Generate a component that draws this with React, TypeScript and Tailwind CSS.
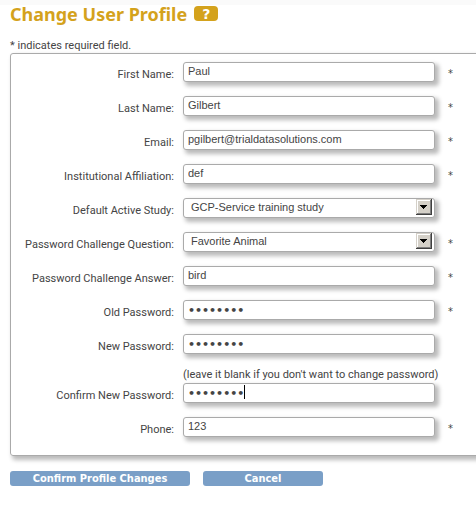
import type { ReactNode } from 'react';

const control =
  "block h-5 w-full appearance-none rounded-[3px] border border-[#aaaaaa] bg-white pb-[2px] font-['Liberation_Sans',sans-serif] text-[11px] leading-4 text-[#444444] shadow-[3px_3px_4px_1px_#bbbbbb] outline-none";

const actionButton =
  "h-[15px] rounded-[3px] bg-[#7a9fc7] font-['DejaVu_Sans_Condensed','DejaVu_Sans',sans-serif] text-[11px] leading-4 font-bold text-white";

type RowProps = {
  id: string;
  label: string;
  required?: boolean;
  hint?: string;
  children: ReactNode;
};

function Row({ id, label, required, hint, children }: RowProps) {
  return (
    <div>
      {hint && <p className="ml-[172px] h-[15px] text-[11px] leading-[14px] whitespace-nowrap">{hint}</p>}
      <div className="flex h-[34px] items-start">
        <label htmlFor={id} className="w-[163px] shrink-0 pt-[5px] text-right text-[11px] leading-4 whitespace-nowrap">
          {label}:
        </label>
        <div className="relative ml-[9px] w-[252px] shrink-0">{children}</div>
        {required && (
          <span className="ml-[13px] pt-1 font-['DejaVu_Sans_Condensed','DejaVu_Sans',sans-serif] text-[11px] leading-4">
            *
          </span>
        )}
      </div>
    </div>
  );
}

function TextField({ id, value }: { id: string; value: string }) {
  return <input id={id} type="text" defaultValue={value} className={`${control} px-1`} />;
}

function PasswordField({ id, active }: { id: string; active?: boolean }) {
  return (
    <>
      <input
        id={id}
        type="password"
        defaultValue="password"
        className="block h-5 w-full rounded-[3px] border border-[#aaaaaa] bg-white px-1 font-['DejaVu_Sans',sans-serif] text-[11px] leading-4 font-bold text-[#444444] shadow-[3px_3px_4px_1px_#bbbbbb] outline-none"
      />
      {active && <span className="pointer-events-none absolute top-[2px] left-[61px] h-[14px] w-px bg-black" />}
    </>
  );
}

function SelectField({ id, value }: { id: string; value: string }) {
  return (
    <>
      <select id={id} defaultValue={value} className={`${control} pr-5 pl-[7px]`}>
        <option>{value}</option>
      </select>
      <svg
        aria-hidden="true"
        viewBox="0 0 16 16"
        className="pointer-events-none absolute top-px right-[3px] size-4"
        shapeRendering="crispEdges"
      >
        <rect width="16" height="16" fill="#404040" />
        <rect width="15" height="15" fill="#d4d0c8" />
        <rect x="1" y="1" width="14" height="14" fill="#808080" />
        <rect x="1" y="1" width="13" height="13" fill="#ffffff" />
        <rect x="2" y="2" width="12" height="12" fill="#d4d0c8" />
        <path d="M4 6h7v1h-1v1h-1v1h-1v1h-1v-1h-1v-1h-1v-1h-1z" fill="#000000" />
      </svg>
    </>
  );
}

export default function App() {
  return (
    <main className="min-h-screen overflow-hidden border-t-[5px] border-[#fafafa] bg-white pl-[10px] font-['Roboto',sans-serif] text-[#444444]">
      <header className="flex h-[22px] items-start gap-[7px]">
        <h1 className="font-['Noto_Sans',sans-serif] text-[18px] leading-[18px] font-bold whitespace-nowrap text-[#d4a21c]">
          Change User Profile
        </h1>
        <button
          type="button"
          aria-label="Help"
          className="mt-px h-[15px] w-6 rounded-[4px] bg-[#d4a21c] font-['DejaVu_Sans',sans-serif] text-[14px] leading-4 font-bold text-white"
        >
          ?
        </button>
      </header>
      <form onSubmit={(e) => e.preventDefault()}>
        <p className="h-[26px] pt-[11px] text-[11px] leading-4">* indicates required field.</p>
        <section className="-mr-4 rounded-[3px] border border-[#aaaaaa] pt-2 pb-1 shadow-[3px_3px_4px_1px_#bbbbbb]">
          <Row id="first" label="First Name" required>
            <TextField id="first" value="Paul" />
          </Row>
          <Row id="last" label="Last Name" required>
            <TextField id="last" value="Gilbert" />
          </Row>
          <Row id="email" label="Email" required>
            <TextField id="email" value="pgilbert@trialdatasolutions.com" />
          </Row>
          <Row id="affiliation" label="Institutional Affiliation" required>
            <TextField id="affiliation" value="def" />
          </Row>
          <Row id="study" label="Default Active Study">
            <SelectField id="study" value="GCP-Service training study" />
          </Row>
          <Row id="question" label="Password Challenge Question" required>
            <SelectField id="question" value="Favorite Animal" />
          </Row>
          <Row id="answer" label="Password Challenge Answer" required>
            <TextField id="answer" value="bird" />
          </Row>
          <Row id="old" label="Old Password" required>
            <PasswordField id="old" />
          </Row>
          <Row id="new" label="New Password">
            <PasswordField id="new" />
          </Row>
          <Row id="confirm" label="Confirm New Password" hint="(leave it blank if you don't want to change password)">
            <PasswordField id="confirm" active />
          </Row>
          <Row id="phone" label="Phone" required>
            <TextField id="phone" value="123" />
          </Row>
        </section>
        <div className="mt-[15px] flex gap-[13px]">
          <button type="submit" className={`${actionButton} w-[180px]`}>
            Confirm Profile Changes
          </button>
          <button type="button" className={`${actionButton} w-[120px]`}>
            Cancel
          </button>
        </div>
      </form>
    </main>
  );
}
